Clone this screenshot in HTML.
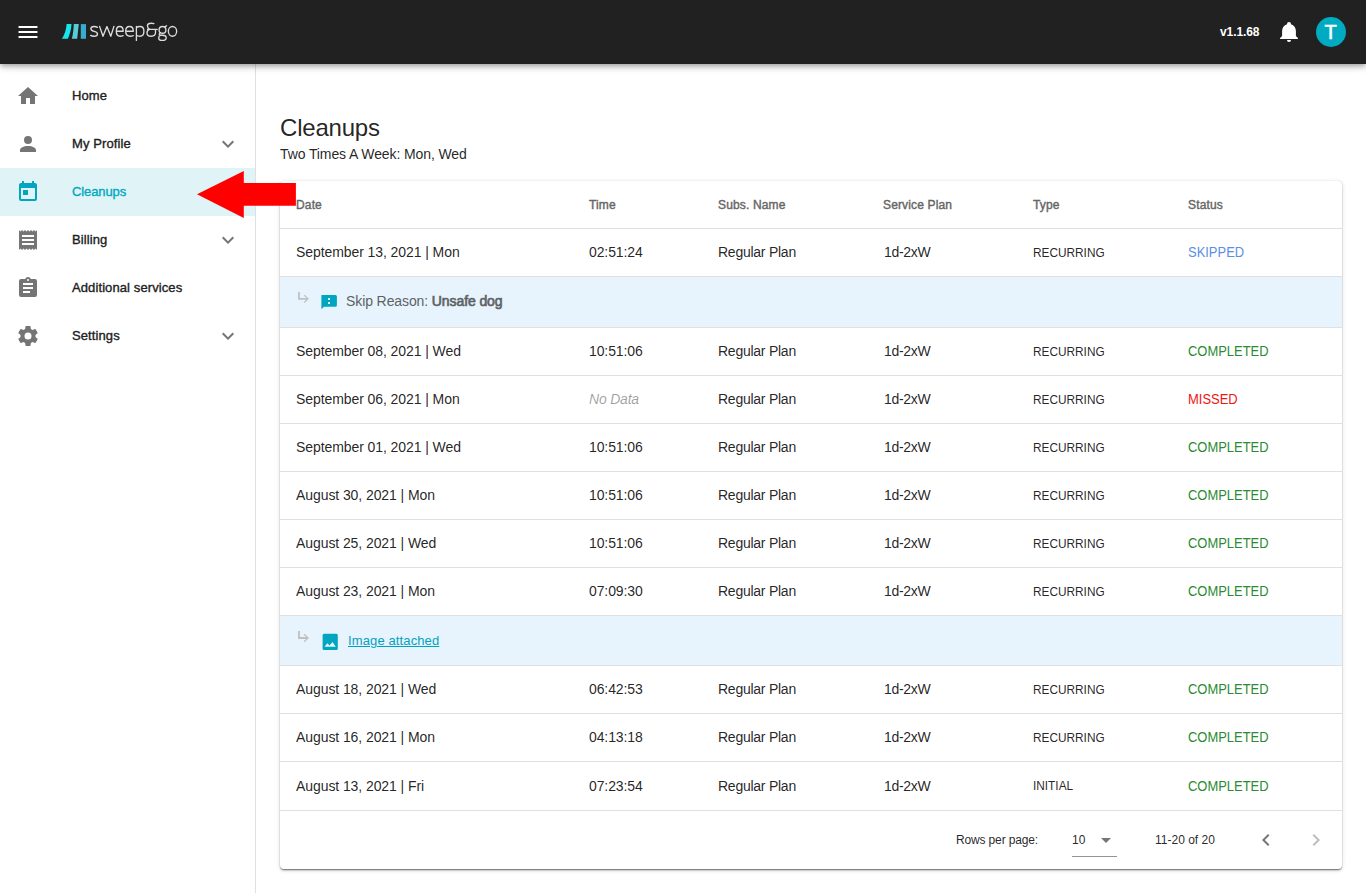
<!DOCTYPE html>
<html><head><meta charset="utf-8">
<style>
*{box-sizing:border-box;margin:0;padding:0}
html,body{width:1366px;height:893px;overflow:hidden;background:#fff;font-family:"Liberation Sans",sans-serif;color:rgba(0,0,0,.87)}
#bar{position:absolute;left:0;top:0;width:1366px;height:64px;background:#212121;z-index:5;box-shadow:0 2px 4px -1px rgba(0,0,0,.2),0 4px 5px 0 rgba(0,0,0,.14),0 1px 10px 0 rgba(0,0,0,.12)}
#side{position:absolute;left:0;top:64px;width:256px;height:829px;border-right:1px solid rgba(0,0,0,.12);background:#fff}
.nav{position:absolute;left:0;width:255px;height:48px}
.nav svg.ic{position:absolute;left:16px;top:12px;width:24px;height:24px;fill:#757575}
.nav .t{position:absolute;left:72px;top:0;line-height:48px;font-size:13px;letter-spacing:0.1px;color:#212121;-webkit-text-stroke:0.35px #212121}
.nav svg.ch{position:absolute;left:216px;top:12px;width:24px;height:24px;fill:rgba(0,0,0,.54)}
.nav.act{background:#e0f4f7}
.nav.act svg.ic{fill:#00a6c0}
.nav.act .t{color:#00a8c2;-webkit-text-stroke:0.35px #00a8c2;letter-spacing:-0.1px}
h1{position:absolute;left:280px;top:112px;font-size:24px;font-weight:normal;line-height:32px;color:rgba(0,0,0,.87);letter-spacing:-0.2px}
.sub{position:absolute;left:280px;top:144px;font-size:14px;line-height:20px;color:rgba(0,0,0,.87);letter-spacing:-0.1px}
#card{position:absolute;left:280px;top:181px;width:1062px;height:688px;border-radius:4px;background:#fff;box-shadow:0 3px 1px -2px rgba(0,0,0,.2),0 2px 2px 0 rgba(0,0,0,.14),0 1px 5px 0 rgba(0,0,0,.12),0 1px 1px 0 rgba(0,0,0,.22),0 0 1px 0 rgba(0,0,0,.2)}
.row{position:absolute;left:0;width:1062px;height:48px;border-bottom:1px solid #e0e0e0}
.row span{position:absolute;top:0;line-height:47px;font-size:14px;white-space:nowrap;transform-origin:0 50%}
.hd span{font-size:12px;color:#666;-webkit-text-stroke:0.4px #666;line-height:49px;letter-spacing:0.15px}
.c1{left:16px}.c2{left:309px}.c3{left:438px}.c4{left:603px}.c5{left:753px}.c6{left:908px}
.sx{transform:scaleX(.925)}
.lst span{line-height:48px}
.typ{font-size:13px!important;transform:scaleX(.91)}
.sk{color:#5b8ee6}.ok{color:#2b8a32}.ms{color:#f01414}
.nd{font-style:italic;color:rgba(0,0,0,.38)}
.ext{position:absolute;left:0;width:1062px;background:#e8f4fd;border-bottom:1px solid #e0e0e0}
.ext svg{position:absolute;left:0;top:0}
.ext .tx{position:absolute;font-size:14px;white-space:nowrap}
#foot{position:absolute;left:0;width:1062px;height:58px;font-size:12px;color:rgba(0,0,0,.87)}
#foot span{position:absolute;top:0;line-height:58px;white-space:nowrap}
#arrow{position:absolute;left:0;top:0;z-index:10}
</style></head><body>

<div id="bar">
<svg style="position:absolute;left:16px;top:20px" width="24" height="24" viewBox="0 0 24 24"><path fill="none" stroke="#fff" stroke-width="2" stroke-linecap="round" d="M3.3,7H20.7M3.3,12H20.7M3.3,17H20.7"/></svg>
<svg style="position:absolute;left:0;top:0" width="200" height="64" viewBox="0 0 200 64">
<path fill="#18e4ee" d="M66.6,24.1H71.5C71.3,29.3 70,34 67.9,38.8H61.9C64.6,34.5 66.3,29.8 66.6,24.1Z"/>
<path fill="#55ced8" d="M73.8,24.1H78.8L77.2,38.8H71.9C73,34 73.6,29.5 73.8,24.1Z"/>
<path fill="#35adcb" d="M80.8,24.1H86V38.8H80.8Z"/>
<g fill="none" stroke="#dcdcdc" stroke-width="1.35" stroke-linecap="round" stroke-linejoin="round">
<path d="M97.4,27.4C96.6,26.8 95.4,26.5 94,26.5C92,26.5 90.9,27.5 90.9,28.8C90.9,30.4 92.3,30.9 94.1,31.3C96.2,31.8 97.5,32.4 97.5,34C97.5,35.5 96.2,36.2 94,36.2C92.6,36.2 91.4,35.9 90.7,35.4"/>
<path d="M99.6,26.4L103,36.2L106.9,26.6L110.8,36.2L113.9,26.4"/>
<path d="M116.3,31.2H123.2C123.2,28.3 122,26.5 119.7,26.5C117.4,26.5 116.3,28.4 116.3,31.3C116.3,34.5 117.7,36.2 120.2,36.2C121.3,36.2 122.3,36 123.1,35.6"/>
<path d="M125.7,31.2H133.3C133.3,28.3 132,26.5 129.6,26.5C127,26.5 125.7,28.4 125.7,31.3C125.7,34.5 127.3,36.2 130,36.2C131.2,36.2 132.3,36 133.2,35.6"/>
<path d="M136.4,26.4V40.4M136.4,27.6C137.5,26.8 138.6,26.5 140,26.5C142.7,26.5 143.9,28.4 143.9,31.3C143.9,34.3 142.6,36.2 140,36.2C138.7,36.2 137.5,35.9 136.4,35.2"/>
<path d="M153.9,23.6C152.7,23.2 150.8,23.1 149.4,23.5C147.8,24 147.3,25.3 147.5,26.4C147.7,27.7 148.6,28.8 149.8,29.3M147.6,29.4H157.2M149.6,29.4C147.6,30 147,31.4 147,32.9C147,35 148.6,36.2 151.3,36.2C154,36.2 155.5,34.8 155.5,32.6V29.4"/>
<path d="M162.5,26.5C160.3,26.5 159.1,27.9 159.1,29.9C159.1,31.9 160.3,33.2 162.5,33.2C164.7,33.2 165.9,31.9 165.9,29.9C165.9,27.9 164.7,26.5 162.5,26.5ZM164.6,27.1L166.5,25.7M160.4,32.8C159.3,33.4 158.9,34.2 159.5,34.7C160.1,35.1 161.1,35.2 162.6,35.2C165.1,35.2 166.2,36 166.2,37.7C166.2,39.6 164.7,40.4 162.4,40.4C160.1,40.4 158.7,39.6 158.7,37.9C158.7,36.7 159.5,35.7 160.6,35.2"/>
<ellipse cx="172.5" cy="31.35" rx="4.15" ry="4.85"/>
</g>
</svg>
<div style="position:absolute;left:1220px;top:24px;font-size:12px;line-height:16px;font-weight:bold;color:#fff;letter-spacing:-0.1px">v1.1.68</div>
<svg style="position:absolute;left:1277px;top:20px" width="24" height="24" viewBox="0 0 24 24"><path fill="#fff" d="M20.9,18V19H3.1V18L5.1,16V11C5.1,7.9 7.1,5.17 10,4.29C10,4.19 10,4.1 10,4A2,2 0 0,1 12,2A2,2 0 0,1 14,4C14,4.1 14,4.19 14,4.29C16.9,5.17 18.9,7.9 18.9,11V16L20.9,18M14,20A2,2 0 0,1 12,22A2,2 0 0,1 10,20"/></svg>
<div style="position:absolute;left:1316px;top:17px;width:30px;height:30px;border-radius:50%;background:#00abc2;color:#fff;font-size:20px;line-height:30px;text-align:center;text-indent:-1px;-webkit-text-stroke:0.6px #fff">T</div>
</div>

<div id="side">
<div class="nav" style="top:8px"><svg class="ic" viewBox="0 0 24 24"><path d="M10,20V14H14V20H19V12H22L12,3L2,12H5V20H10Z"/></svg><div class="t">Home</div></div>
<div class="nav" style="top:56px"><svg class="ic" viewBox="0 0 24 24"><path d="M12,4A4,4 0 0,1 16,8A4,4 0 0,1 12,12A4,4 0 0,1 8,8A4,4 0 0,1 12,4M12,14C16.42,14 20,15.79 20,18V20H4V18C4,15.79 7.58,14 12,14Z"/></svg><div class="t">My Profile</div><svg class="ch" viewBox="0 0 24 24"><path d="M7.41,8.58L12,13.17L16.59,8.58L18,10L12,16L6,10L7.41,8.58Z"/></svg></div>
<div class="nav act" style="top:104px"><svg class="ic" viewBox="0 0 24 24"><path d="M7,10H12V15H7M19,19H5V8H19M19,3H18V1H16V3H8V1H6V3H5C3.89,3 3,3.9 3,5V19A2,2 0 0,0 5,21H19A2,2 0 0,0 21,19V5A2,2 0 0,0 19,3Z"/></svg><div class="t">Cleanups</div></div>
<div class="nav" style="top:152px"><svg class="ic" viewBox="0 0 24 24"><path d="M3,22L4.5,20.5L6,22L7.5,20.5L9,22L10.5,20.5L12,22L13.5,20.5L15,22L16.5,20.5L18,22L19.5,20.5L21,22V2L19.5,3.5L18,2L16.5,3.5L15,2L13.5,3.5L12,2L10.5,3.5L9,2L7.5,3.5L6,2L4.5,3.5L3,2M18,9H6V7H18M18,13H6V11H18M18,17H6V15H18V17Z"/></svg><div class="t">Billing</div><svg class="ch" viewBox="0 0 24 24"><path d="M7.41,8.58L12,13.17L16.59,8.58L18,10L12,16L6,10L7.41,8.58Z"/></svg></div>
<div class="nav" style="top:200px"><svg class="ic" viewBox="0 0 24 24"><path d="M17,9H7V7H17M17,13H7V11H17M14,17H7V15H14M12,3A1,1 0 0,1 13,4A1,1 0 0,1 12,5A1,1 0 0,1 11,4A1,1 0 0,1 12,3M19,3H14.82C14.4,1.84 13.3,1 12,1C10.7,1 9.6,1.84 9.18,3H5A2,2 0 0,0 3,5V19A2,2 0 0,0 5,21H19A2,2 0 0,0 21,19V5A2,2 0 0,0 19,3Z"/></svg><div class="t">Additional services</div></div>
<div class="nav" style="top:248px"><svg class="ic" viewBox="0 0 24 24"><path d="M12,15.5A3.5,3.5 0 0,1 8.5,12A3.5,3.5 0 0,1 12,8.5A3.5,3.5 0 0,1 15.5,12A3.5,3.5 0 0,1 12,15.5M19.43,12.97C19.47,12.65 19.5,12.33 19.5,12C19.5,11.67 19.47,11.34 19.43,11L21.54,9.37C21.73,9.22 21.78,8.95 21.66,8.73L19.66,5.27C19.54,5.05 19.27,4.96 19.05,5.05L16.56,6.05C16.04,5.66 15.5,5.32 14.87,5.07L14.5,2.42C14.46,2.18 14.25,2 14,2H10C9.75,2 9.54,2.18 9.5,2.42L9.13,5.07C8.5,5.32 7.96,5.66 7.44,6.05L4.95,5.05C4.73,4.96 4.46,5.05 4.34,5.27L2.34,8.73C2.21,8.95 2.27,9.22 2.46,9.37L4.57,11C4.53,11.34 4.5,11.67 4.5,12C4.5,12.33 4.53,12.65 4.57,12.97L2.46,14.63C2.27,14.78 2.21,15.05 2.34,15.27L4.34,18.73C4.46,18.95 4.73,19.03 4.95,18.95L7.44,17.94C7.96,18.34 8.5,18.68 9.13,18.93L9.5,21.58C9.54,21.82 9.75,22 10,22H14C14.25,22 14.46,21.82 14.5,21.58L14.87,18.93C15.5,18.67 16.04,18.34 16.56,17.94L19.05,18.95C19.27,19.03 19.54,18.95 19.66,18.73L21.66,15.27C21.78,15.05 21.73,14.78 21.54,14.63L19.43,12.97Z"/></svg><div class="t">Settings</div><svg class="ch" viewBox="0 0 24 24"><path d="M7.41,8.58L12,13.17L16.59,8.58L18,10L12,16L6,10L7.41,8.58Z"/></svg></div>
</div>
<h1>Cleanups</h1><div class="sub">Two Times A Week: Mon, Wed</div>
<div id="card">
<div class="row hd" style="top:0"><span class="c1">Date</span><span class="c2">Time</span><span class="c3">Subs. Name</span><span class="c4">Service Plan</span><span class="c5">Type</span><span class="c6">Status</span></div>
<div class="row" style="top:48px;height:48px"><span class="c1" style="letter-spacing:-0.08px">September 13, 2021 | Mon</span><span class="c2" style="letter-spacing:-0.1px">02:51:24</span><span class="c3" style="letter-spacing:-0.25px">Regular Plan</span><span class="c4" style="left:604px;letter-spacing:-0.3px">1d-2xW</span><span class="c5 typ">RECURRING</span><span class="c6 sx sk">SKIPPED</span></div>
<div class="ext" style="top:96px;height:51px"><svg width="1062" height="51"><path fill="none" stroke="#c0c0c0" stroke-width="1.8" d="M19,15V21.8H27.5"/><path fill="none" stroke="#c0c0c0" stroke-width="1.3" d="M24.2,18.1L28,21.8L24.2,25.5"/><path fill="#00a5bf" fill-rule="evenodd" d="M41.4,17.9H55.4Q56.9,17.9 56.9,19.4V28.3Q56.9,29.8 55.4,29.8H44L41.4,32.2ZM48.1,21.1H50V22.9H48.1ZM48.1,25.1H50V26.9H48.1Z"/></svg><div class="tx" style="left:66px;top:-1px;line-height:50px;color:#5d6265;letter-spacing:-0.1px">Skip Reason: <span style="color:#5d6265;-webkit-text-stroke:0.65px #5d6265">Unsafe dog</span></div></div>
<div class="row" style="top:147px;height:48px"><span class="c1" style="letter-spacing:-0.08px">September 08, 2021 | Wed</span><span class="c2" style="letter-spacing:-0.1px">10:51:06</span><span class="c3" style="letter-spacing:-0.25px">Regular Plan</span><span class="c4" style="left:604px;letter-spacing:-0.3px">1d-2xW</span><span class="c5 typ">RECURRING</span><span class="c6 sx ok">COMPLETED</span></div>
<div class="row" style="top:195px;height:48px"><span class="c1" style="letter-spacing:-0.08px">September 06, 2021 | Mon</span><span class="c2 nd" style="letter-spacing:-0.2px">No Data</span><span class="c3" style="letter-spacing:-0.25px">Regular Plan</span><span class="c4" style="left:604px;letter-spacing:-0.3px">1d-2xW</span><span class="c5 typ">RECURRING</span><span class="c6 sx ms">MISSED</span></div>
<div class="row" style="top:243px;height:48px"><span class="c1" style="letter-spacing:-0.08px">September 01, 2021 | Wed</span><span class="c2" style="letter-spacing:-0.1px">10:51:06</span><span class="c3" style="letter-spacing:-0.25px">Regular Plan</span><span class="c4" style="left:604px;letter-spacing:-0.3px">1d-2xW</span><span class="c5 typ">RECURRING</span><span class="c6 sx ok">COMPLETED</span></div>
<div class="row" style="top:291px;height:48px"><span class="c1" style="letter-spacing:-0.08px">August 30, 2021 | Mon</span><span class="c2" style="letter-spacing:-0.1px">10:51:06</span><span class="c3" style="letter-spacing:-0.25px">Regular Plan</span><span class="c4" style="left:604px;letter-spacing:-0.3px">1d-2xW</span><span class="c5 typ">RECURRING</span><span class="c6 sx ok">COMPLETED</span></div>
<div class="row" style="top:339px;height:48px"><span class="c1" style="letter-spacing:-0.08px">August 25, 2021 | Wed</span><span class="c2" style="letter-spacing:-0.1px">10:51:06</span><span class="c3" style="letter-spacing:-0.25px">Regular Plan</span><span class="c4" style="left:604px;letter-spacing:-0.3px">1d-2xW</span><span class="c5 typ">RECURRING</span><span class="c6 sx ok">COMPLETED</span></div>
<div class="row" style="top:387px;height:48px"><span class="c1" style="letter-spacing:-0.08px">August 23, 2021 | Mon</span><span class="c2" style="letter-spacing:-0.1px">07:09:30</span><span class="c3" style="letter-spacing:-0.25px">Regular Plan</span><span class="c4" style="left:604px;letter-spacing:-0.3px">1d-2xW</span><span class="c5 typ">RECURRING</span><span class="c6 sx ok">COMPLETED</span></div>
<div class="ext" style="top:435px;height:50px"><svg width="1062" height="50"><path fill="none" stroke="#c0c0c0" stroke-width="1.8" d="M19,15V22H27.5"/><path fill="none" stroke="#c0c0c0" stroke-width="1.3" d="M24.2,18.3L28,22L24.2,25.7"/><path fill="#00a5bf" fill-rule="evenodd" d="M44.1,17.8H56.3Q57.8,17.8 57.8,19.3V32.5Q57.8,34 56.3,34H44.1Q42.6,34 42.6,32.5V19.3Q42.6,17.8 44.1,17.8ZM44.5,30.8L47.4,27.2L49.5,29.6L52.5,26.1L55.8,30.8Z"/></svg><div class="tx" style="left:68px;top:0;line-height:49px;font-size:13px;color:#00a3bf;text-decoration:underline;letter-spacing:0.12px">Image attached</div></div>
<div class="row" style="top:485px;height:48px"><span class="c1" style="letter-spacing:-0.08px">August 18, 2021 | Wed</span><span class="c2" style="letter-spacing:-0.1px">06:42:53</span><span class="c3" style="letter-spacing:-0.25px">Regular Plan</span><span class="c4" style="left:604px;letter-spacing:-0.3px">1d-2xW</span><span class="c5 typ">RECURRING</span><span class="c6 sx ok">COMPLETED</span></div>
<div class="row" style="top:533px;height:48px"><span class="c1" style="letter-spacing:-0.08px">August 16, 2021 | Mon</span><span class="c2" style="letter-spacing:-0.1px">04:13:18</span><span class="c3" style="letter-spacing:-0.25px">Regular Plan</span><span class="c4" style="left:604px;letter-spacing:-0.3px">1d-2xW</span><span class="c5 typ">RECURRING</span><span class="c6 sx ok">COMPLETED</span></div>
<div class="row lst" style="top:581px;height:49px"><span class="c1" style="letter-spacing:-0.08px">August 13, 2021 | Fri</span><span class="c2" style="letter-spacing:-0.1px">07:23:54</span><span class="c3" style="letter-spacing:-0.25px">Regular Plan</span><span class="c4" style="left:604px;letter-spacing:-0.3px">1d-2xW</span><span class="c5 typ">INITIAL</span><span class="c6 sx ok">COMPLETED</span></div>
<div id="foot" style="top:630px">
<span style="left:676px;letter-spacing:-0.15px">Rows per page:</span>
<span style="left:792px">10</span>
<svg style="position:absolute;left:814px;top:17px" width="24" height="24" viewBox="0 0 24 24"><path fill="rgba(0,0,0,.54)" d="M7,10L12,15L17,10H7Z"/></svg>
<div style="position:absolute;left:792px;top:45px;width:45px;height:1px;background:rgba(0,0,0,.42)"></div>
<span style="left:875px">11-20 of 20</span>
<svg style="position:absolute;left:974px;top:17px" width="24" height="24" viewBox="0 0 24 24"><path fill="rgba(0,0,0,.54)" d="M15.41,16.58L10.83,12L15.41,7.41L14,6L8,12L14,18L15.41,16.58Z"/></svg>
<svg style="position:absolute;left:1024px;top:17px" width="24" height="24" viewBox="0 0 24 24"><path fill="rgba(0,0,0,.26)" d="M8.59,16.58L13.17,12L8.59,7.41L10,6L16,12L10,18L8.59,16.58Z"/></svg>
</div>
</div>
<svg id="arrow" width="1366" height="893"><path fill="#f00" d="M197,194.3L243.8,171V183H295.9V205.7H243.8V218Z"/></svg>
</body></html>
